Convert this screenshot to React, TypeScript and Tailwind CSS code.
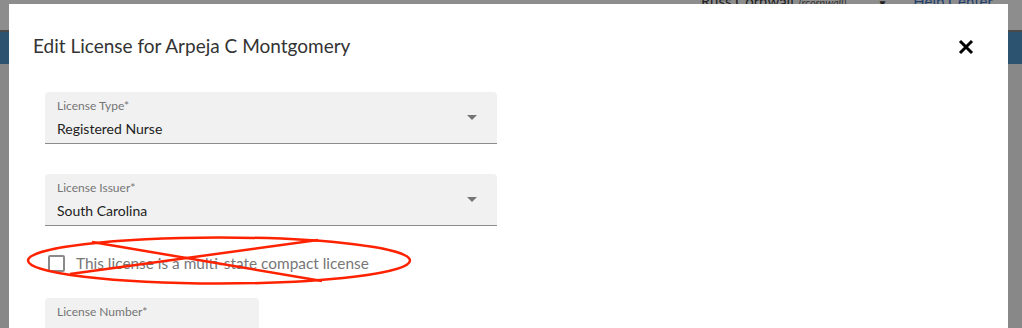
import * as React from "react";

const font = { fontFamily: "Lato, 'Open Sans', sans-serif" };

function SelectField({ label, value }: { label: string; value: string }) {
  return (
    <div className="flex h-[52px] w-[452px] items-center justify-between rounded-t-[4px] border-b border-[#8c8c8c] bg-[#f1f1f1] pl-3 pr-5">
      <div className="flex flex-col">
        <span className="text-[12px] leading-[16px] text-[#757575]">{label}</span>
        <span className="mt-[6px] text-[14px] leading-[18px] text-[#222]">{value}</span>
      </div>
      <span className="h-0 w-0 border-x-[5px] border-t-[5px] border-x-transparent border-t-[#757575]" />
    </div>
  );
}

export default function App() {
  return (
    <div className="relative h-[328px] w-full overflow-hidden bg-[#888888]" style={font}>
      {/* page behind the dialog */}
      <div className="flex h-[30px] items-start justify-end gap-[26px] bg-[#8d8d8d] pr-[29px]">
        <div className="-mt-[10px] flex items-baseline gap-[5px] text-[#222]">
          <span className="text-[15px]">Russ Cornwall</span>
          <span className="text-[11px] italic text-[#333]">(rcornwall)</span>
          <span className="ml-[26px] text-[10px]">▼</span>
        </div>
        <span className="-mt-[10px] text-[15px] text-[#1f3f6e]">Help Center</span>
      </div>
      <div className="h-[34px] border-t-2 border-[#4a4a4a] bg-[#2c5370]" />

      {/* dialog */}
      <div className="absolute bottom-0 left-[9px] right-[14px] top-[4px] bg-white">
        <div className="flex items-center justify-between pl-6 pr-[34px] pt-[30px]">
          <h2 className="text-[19px] leading-[24px] text-[#333]">Edit License for Arpeja C Montgomery</h2>
          <svg width="16" height="16" viewBox="0 0 16 16" className="mt-[2px]">
            <path d="M2 2 L14 14 M14 2 L2 14" stroke="#000" strokeWidth="3" />
          </svg>
        </div>

        <div className="flex flex-col pl-9 pt-[34px]">
          <SelectField label="License Type*" value="Registered Nurse" />
          <div className="mt-[30px]">
            <SelectField label="License Issuer*" value="South Carolina" />
          </div>
          <label className="mt-[27px] flex items-center gap-[11px] pl-[3px]">
            <span className="h-[17px] w-[17px] rounded-[2px] border-2 border-[#8a8a8a]" />
            <span className="text-[15.4px] leading-[20px] text-[#777]">This license is a multi-state compact license</span>
          </label>
          <div className="mt-[25px] h-[40px] w-[214px] rounded-t-[4px] bg-[#f1f1f1] pl-3 pt-[6px]">
            <span className="block text-[12px] leading-[16px] text-[#757575]">License Number*</span>
          </div>
        </div>
      </div>

      {/* red annotation over the checkbox row */}
      <svg className="pointer-events-none absolute left-0 top-0" width="1022" height="328">
        <ellipse cx="219" cy="260.5" rx="191" ry="23" fill="none" stroke="#ff2200" strokeWidth="2.5" />
        <path d="M92 242 L322 281 M318 240 L70 274" fill="none" stroke="#ff2200" strokeWidth="2.5" />
      </svg>
    </div>
  );
}
